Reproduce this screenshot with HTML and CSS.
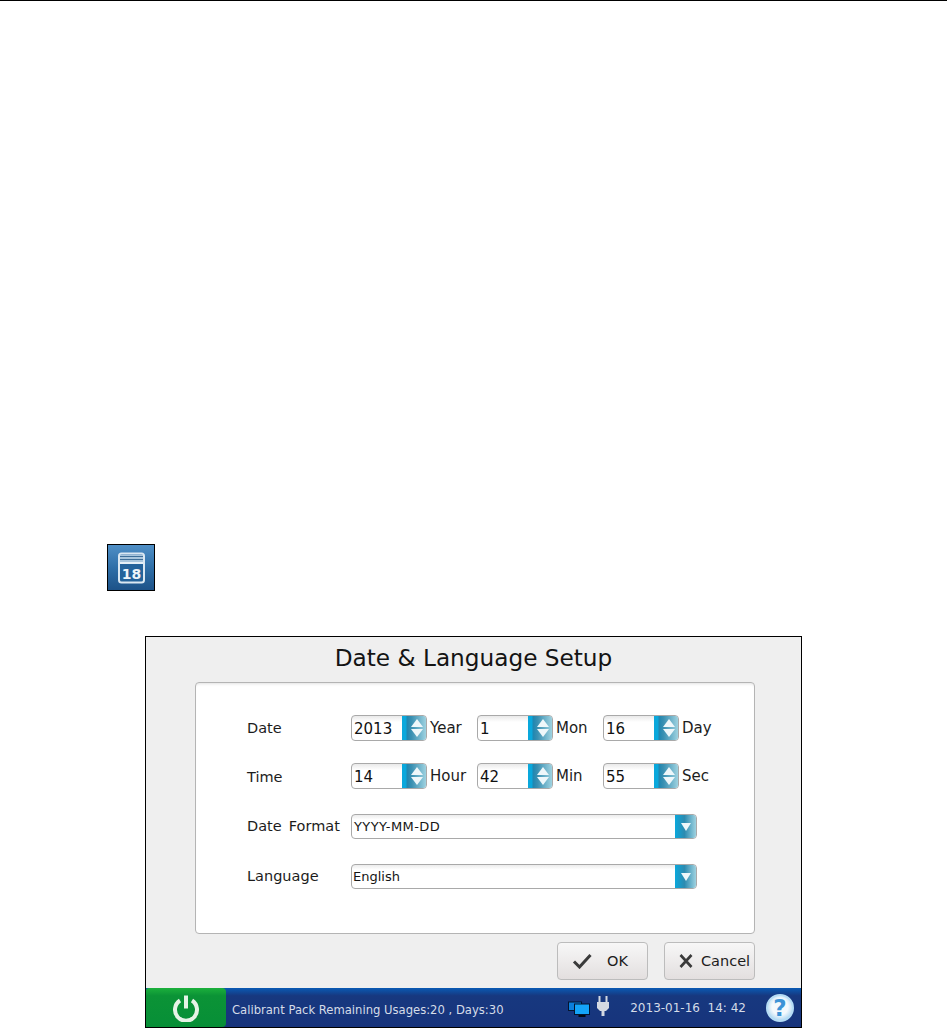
FILE: index.html
```html
<!DOCTYPE html>
<html lang="en">
<head>
<meta charset="utf-8">
<title>Date &amp; Language Setup</title>
<link rel="stylesheet" href="styles.css">
</head>
<body>
<div class="rule"></div>
<div class="cal-icon">
  <svg width="46" height="45" viewBox="0 0 46 45">
    <rect x="11" y="8.5" width="25" height="29" rx="2.5" fill="#24639b" stroke="#dbe8f2" stroke-width="2"/>
    <rect x="12" y="9.5" width="23" height="8.5" fill="#a9c6dd"/>
    <path d="M12 11.5h23M12 14.5h23" stroke="#3f6f99" stroke-width="1"/>
    <path d="M12 18h23" stroke="#e6f0f7" stroke-width="2"/>
    <text x="23.5" y="33.5" class="cal-num" text-anchor="middle">18</text>
  </svg>
</div>
<main class="window">
  <h1 class="title">Date &amp; Language Setup</h1>
  <section class="panel">
    <div class="row row-date">
      <span class="label">Date</span>
      <div class="spin"><span class="val">2013</span><span class="spin-btn"><i class="up"></i><i class="down"></i></span></div><span class="unit">Year</span>
      <div class="spin"><span class="val">1</span><span class="spin-btn"><i class="up"></i><i class="down"></i></span></div><span class="unit">Mon</span>
      <div class="spin"><span class="val">16</span><span class="spin-btn"><i class="up"></i><i class="down"></i></span></div><span class="unit">Day</span>
    </div>
    <div class="row row-time">
      <span class="label">Time</span>
      <div class="spin"><span class="val">14</span><span class="spin-btn"><i class="up"></i><i class="down"></i></span></div><span class="unit">Hour</span>
      <div class="spin"><span class="val">42</span><span class="spin-btn"><i class="up"></i><i class="down"></i></span></div><span class="unit">Min</span>
      <div class="spin"><span class="val">55</span><span class="spin-btn"><i class="up"></i><i class="down"></i></span></div><span class="unit">Sec</span>
    </div>
    <div class="row row-format">
      <span class="label">Date Format</span>
      <div class="select"><span class="sel-val">YYYY-MM-DD</span><span class="sel-btn"><i class="down"></i></span></div>
    </div>
    <div class="row row-lang">
      <span class="label">Language</span>
      <div class="select"><span class="sel-val">English</span><span class="sel-btn"><i class="down"></i></span></div>
    </div>
  </section>
  <div class="actions">
    <button class="btn btn-ok" type="button">
      <svg width="20" height="16" viewBox="0 0 20 16"><path d="M2 8.5l5.5 5.5L18.5 2" fill="none" stroke="#3a3a3a" stroke-width="3"/></svg>
      <span>OK</span>
    </button>
    <button class="btn btn-cancel" type="button">
      <svg width="14" height="14" viewBox="0 0 14 14"><path d="M1.5 1l11 12M12.5 1l-11 12" fill="none" stroke="#3a3a3a" stroke-width="2.6"/></svg>
      <span>Cancel</span>
    </button>
  </div>
  <footer class="taskbar">
    <div class="power">
      <svg width="28" height="28" viewBox="0 0 28 28"><path d="M8 6.5a11 11 0 1 0 12 0" fill="none" stroke="#e6f3e6" stroke-width="4"/><path d="M14 1.5v13" stroke="#e6f3e6" stroke-width="4" fill="none"/></svg>
    </div>
    <span class="status">Calibrant Pack Remaining Usages:20 , Days:30</span>
    <div class="tray">
      <svg class="net" width="22" height="16" viewBox="0 0 22 16">
        <rect x="0.5" y="1" width="13" height="8.5" fill="#0b7fdc" stroke="#04152f"/>
        <rect x="6.5" y="3" width="15" height="10.5" fill="#14a4f8" stroke="#04152f"/>
        <rect x="10.5" y="14" width="7" height="2" fill="#05080f"/>
      </svg>
      <svg class="plug" width="14" height="20" viewBox="0 0 14 20">
        <path d="M3.5 0v6M10.5 0v6" stroke="#d4d9e2" stroke-width="2"/>
        <path d="M1 6h12v6l-3 3H4l-3-3z" fill="#d4d9e2"/>
        <path d="M7 15v5" stroke="#d4d9e2" stroke-width="3"/>
      </svg>
      <span class="clock">2013-01-16&nbsp; 14: 42</span>
      <div class="help">?</div>
    </div>
  </footer>
</main>
</body>
</html>
```

FILE: styles.css
```css
* { box-sizing: border-box; }
html, body { margin: 0; padding: 0; background: #fff; }
body { height: 1028px; overflow: hidden; font-family: "DejaVu Sans", sans-serif; color: #1c1c1c; }
.rule { height: 1px; background: #000; }
.cal-icon {
  width: 48px; height: 47px; margin: 543px 0 0 107px;
  border: 1px solid #000;
  background: linear-gradient(180deg, #4f8fc6 0%, #2f6fa8 50%, #1d5288 100%);
}
.cal-icon svg { display: block; }
.cal-num { font: bold 14px "DejaVu Sans", sans-serif; fill: #eef4f9; }
.window {
  width: 657px; height: 392px; margin: 45px 0 0 145px;
  border: 1px solid #000; background: #efefef;
  display: flex; flex-direction: column;
}
.title { margin: 0; height: 45px; padding-top: 6px; font-size: 23.2px; line-height: 30px; font-weight: 400; text-align: center; color: #141414; }
.panel {
  width: 560px; height: 252px; margin-left: 49px; padding: 32px 0 0 51px;
  background: #fff; border: 1px solid #b4b4b4; border-radius: 4px;
  box-shadow: inset 0 3px 3px -2px #e2e2e2;
}
.row { display: flex; align-items: center; font-size: 15px; }
.row-time { margin-top: 22px; }
.row-format { margin-top: 25px; }
.row-lang { margin-top: 25px; }
.label { width: 104px; font-size: 14.5px; word-spacing: 2.5px; }
.row-time .label { padding-top: 2px; }
.row-format .label, .row-lang .label { padding-bottom: 2px; }
.spin {
  width: 76px; height: 26px; display: flex; justify-content: space-between;
  border: 1px solid #a9a9a9; border-radius: 4px; overflow: hidden;
  background: linear-gradient(180deg, #e9e9e9 0%, #fff 25%);
}
.val { padding: 1px 0 0 2px; font-size: 15px; line-height: 24px; color: #111; }
.spin-btn {
  width: 24px; display: flex; flex-direction: column; align-items: center; justify-content: center; gap: 2px;
  padding-left: 6px;
  background: linear-gradient(90deg, #0aa8dc 0 4px, #1f86b0 5px, #3a90b2 40%, #9ed2e0 100%);
}
.spin-btn .up, .spin-btn .down, .sel-btn .down { display: block; width: 0; height: 0; }
.spin-btn .up, .spin-btn .down { border-left: 6px solid transparent; border-right: 6px solid transparent; }
.sel-btn .down { border-left: 5px solid transparent; border-right: 5px solid transparent; }
.up { border-bottom: 8px solid #eef7fa; }
.down { border-top: 8px solid #eef7fa; }
.unit { width: 50px; padding-left: 3px; }
.select {
  width: 346px; height: 25px; display: flex; justify-content: space-between;
  border: 1px solid #a9a9a9; border-radius: 4px; overflow: hidden;
  background: linear-gradient(180deg, #ececec 0%, #fff 20%);
}
.sel-val { padding-left: 1px; font-size: 13px; line-height: 23px; color: #151515; }
.row-format .sel-val { padding-left: 2px; letter-spacing: 0.4px; }
.sel-btn {
  width: 21px; display: flex; align-items: center; justify-content: center;
  background: linear-gradient(90deg, #0aa8dc 0%, #2c8bb0 45%, #9ed2e0 100%);
}
.actions { display: flex; justify-content: flex-end; gap: 16px; height: 54px; padding: 8px 46px 0 0; }
.btn {
  width: 91px; height: 38px; display: flex; align-items: center; padding: 0;
  border: 1px solid #bcbcbc; border-radius: 4px;
  background: linear-gradient(180deg, #f7f7f7 0%, #e3dfdf 100%);
  font: 14.5px "DejaVu Sans", sans-serif; color: #1c1c1c;
}
.btn-ok { padding-left: 14px; gap: 15px; }
.btn-cancel { padding-left: 14px; gap: 8px; }
.btn svg { flex: none; }
.taskbar {
  flex: 1; display: flex; align-items: center;
  background: linear-gradient(180deg, #0a5ab4 0%, #17387f 20%, #17347c 100%);
  color: #d5dce8; font-size: 11.6px;
}
.power {
  width: 80px; align-self: stretch; display: flex; align-items: center; justify-content: center;
  background: linear-gradient(180deg, #1cb03c 0%, #0b9336 20%, #078f37 100%);
  border-radius: 3px 4px 4px 0;
}
.status { margin-left: 6px; padding-top: 4px; flex: 1; }
.tray { display: flex; align-items: center; }
.net { margin: 2px 6px 0 0; }
.plug { margin-right: 20px; margin-bottom: 3px; }
.clock { font-size: 12px; margin-right: 20px; }
.help {
  width: 28px; height: 28px; margin-right: 7px; border-radius: 50%;
  background: radial-gradient(circle at 50% 45%, #f4f9fd 0 45%, #7fc0ea 100%);
  border: 2px solid #b5dcf5; color: #3d93d6;
  font: bold 23px/24px "DejaVu Sans", sans-serif; text-align: center;
}
```
